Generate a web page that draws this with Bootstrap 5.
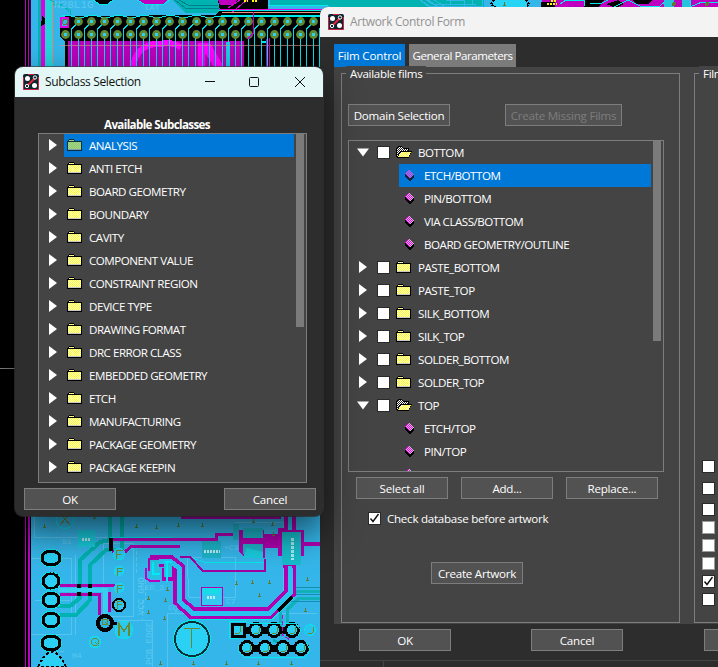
<!DOCTYPE html>
<html lang="en">
<head>
<meta charset="utf-8">
<title>Artwork Control Form</title>
<link href="https://cdn.jsdelivr.net/npm/bootstrap@5.3.0/dist/css/bootstrap.min.css" rel="stylesheet">
<style>
body{width:718px;height:667px;overflow:hidden;background:#000;font-family:"Open Sans","Noto Sans",sans-serif;font-size:11.6px;line-height:16px;color:#fff;letter-spacing:-.27px}
.desk{width:718px;height:667px;overflow:hidden}
.board{left:0;top:0;letter-spacing:0}
.win{background:#2d2d2d;border-radius:8px}
.win-art{left:320px;top:7px;width:500px;height:670px;border-radius:8px 0 0 0;overflow:hidden}
.win-sub{left:15px;top:67px;width:308px;height:449px;box-shadow:0 16px 36px rgba(0,0,0,.6),0 0 0 1px rgba(70,70,70,.7)}
.titlebar{height:30px;padding-left:8px;font-size:12px;letter-spacing:-.34px}
.titlebar span{margin-left:6px}
.win-art .titlebar{background:#f3f3f3;color:#929292}
.win-sub .titlebar{background:#e3f8f6;color:#111;border-radius:8px 8px 0 0}
.cap{width:46px}
.tabs{padding:7px 0 0 14px;gap:4px}
.tab-b{height:23px;line-height:24px;background:#7b7b7b;text-align:center;white-space:nowrap}
.tab-b.on{background:#0078d7;letter-spacing:-.17px}
.tab-b.wide{letter-spacing:-.46px}
.pane{margin-left:14px;height:557px;background:#444;padding:6px 0 0 7px;gap:14px}
.gbox{border:1px solid #7d7d7d;height:550px;width:339px}
.legend-t{height:14px;margin:-8px 0 0 4px;padding:0 4px;background:#444;width:max-content;line-height:16px;letter-spacing:-.33px}
.btn-x{background:#525252;border:1px solid #7d7d7d;color:#fff;border-radius:0;font-size:11.6px;line-height:20px;height:22px;width:92px;padding:1px 0 0;white-space:nowrap;letter-spacing:-.25px}
.btn-x.dim{color:#7d7d7d}
.tree{background:#444;border:1px solid #7d7d7d;overflow:hidden}
.tree .node{height:23px;letter-spacing:-.48px;line-height:23px;white-space:nowrap;padding-left:8px}
.tree .leaf{padding-left:56px}
.tree .leaf.sel{margin:0 2px 0 50px;padding-left:6px}
.node svg{flex:none;margin-bottom:1px}
.node .lbl{margin-left:7px}
.node .lbl.near{margin-left:6px}
.leaf .lbl{margin-left:9px}
.node .box{margin:0 6px 0 8px}
.sel{background:#0078d7}
.track{width:8px;background:#7b7b7b;flex:none}
.box{width:13px;height:13px;background:#fff;border:1px solid #2a2a2a;flex:none;line-height:0}
.box.soft{border-color:#9a9a9a}
</style>
<script src="https://cdn.jsdelivr.net/npm/bootstrap@5.3.0/dist/js/bootstrap.bundle.min.js"></script>
</head>
<body>
<svg width="0" height="0" class="position-absolute">
<defs>
<pattern id="yw" width="2" height="2" patternUnits="userSpaceOnUse"><path fill="#fff" d="M0 0h2v2H0z"/><path fill="#ff0" d="M0 0h1v1H0zM1 1h1v1H1z"/></pattern>
<pattern id="kw" width="2" height="2" patternUnits="userSpaceOnUse"><path fill="#222" d="M0 0h2v2H0z"/><path fill="#fff" d="M0 0h1v1H0zM1 1h1v1H1z"/></pattern>
<pattern id="sg" width="2" height="2" patternUnits="userSpaceOnUse"><path fill="#7fc4a8" d="M0 0h2v2H0z"/><path fill="#b4dc50" d="M0 0h1v1H0zM1 1h1v1H1z"/></pattern>
<pattern id="mg" width="2" height="2" patternUnits="userSpaceOnUse"><path fill="#c0c0c0" d="M0 0h2v2H0z"/><path fill="#f0f" d="M0 0h1v1H0zM1 1h1v1H1z"/></pattern>
<pattern id="mb" width="2" height="2" patternUnits="userSpaceOnUse"><path fill="#7c80d8" d="M0 0h2v2H0z"/><path fill="#b040f0" d="M0 0h1v1H0zM1 1h1v1H1z"/></pattern>
<symbol id="fold" viewBox="0 0 15 12"><g shape-rendering="crispEdges"><path fill="#000" d="M2 0h5v1h1v1h7v10H0V2h1V1h1z"/><path fill="url(#yw)" d="M2 1h5v1H2zM1 3h13v7H1z"/><path fill="#c8c8c8" d="M1 10h13v1H1z"/></g></symbol>
<symbol id="foldsel" viewBox="0 0 15 12"><g shape-rendering="crispEdges"><path fill="#103040" d="M2 0h5v1h1v1h7v10H0V2h1V1h1z"/><path fill="url(#sg)" d="M2 1h5v1H2zM1 3h13v7H1z"/><path fill="#7f9fb0" d="M1 10h13v1H1z"/></g></symbol>
<symbol id="open" viewBox="0 0 16 12"><g shape-rendering="crispEdges"><path fill="#000" d="M2 0h4v1h1v1h6v3h3v1h-1v2h-1v2h-1v2H1v-1H0V2h1V1h1z"/><path fill="url(#kw)" d="M2 1h4v1h1v1h5v2H4v1H3v2H2v2H1V2h1z"/><path fill="url(#yw)" d="M5 6h10v1h-1v2h-1v2H2V10h1V8h1V7h1z"/></g></symbol>
<symbol id="dia" viewBox="0 0 10 12"><g shape-rendering="crispEdges"><path fill="#000" d="M0 4l4-4 5 5.500v2.500l-4 4h-1L0 7z"/><path fill="url(#mg)" d="M0 4l4-4 5 5.500-4 4z"/></g></symbol>
<symbol id="diasel" viewBox="0 0 10 12"><g shape-rendering="crispEdges"><path fill="#182040" d="M0 4l4-4 5 5.500v2.500l-4 4h-1L0 7z"/><path fill="url(#mb)" d="M0 4l4-4 5 5.500-4 4z"/></g></symbol>
<symbol id="tr" viewBox="0 0 12 12"><path fill="#fff" d="M2 0l8 6-8 6z"/></symbol>
<symbol id="td" viewBox="0 0 12 12"><path fill="#fff" d="M0 2.500h12L6 10.500z"/></symbol>
<symbol id="chk" viewBox="0 0 11 11"><path d="M1.500 5.500l2.500 3 5.500-7.500" fill="none" stroke="#111" stroke-width="1.400"/></symbol>
<symbol id="app" viewBox="0 0 16 16"><rect width="16" height="16" rx="2" fill="#0e2532"/><path d="M.5 3v12.500h15V3M5 .5h6" fill="none" stroke="#d0203c" stroke-width="1"/><path d="M5 11l6.500-6.500" stroke="#ee2038" stroke-width="1.800"/><circle cx="4.500" cy="4.500" r="2.500" fill="#fff"/><circle cx="11.500" cy="11.500" r="2.500" fill="#fff"/><circle cx="12" cy="3.500" r="1.700" fill="none" stroke="#fff"/><circle cx="4" cy="12" r="1.700" fill="none" stroke="#fff"/></symbol>
<g id="pad"><circle r="4.400" fill="#5f8a35" shape-rendering="auto"/><path fill="#2bd0f5" d="M-1.500-1.500h3v3h-3z"/></g>
<g id="tick"><path d="M0-2v3M-1.500 1h3" stroke="#5f7a30" fill="none"/></g>
</defs>
</svg>
<div class="desk position-relative">
<svg class="board position-absolute" width="718" height="667" viewBox="0 0 718 667" shape-rendering="crispEdges">
<path fill="#000" d="M0 0h718v667H0z"/>
<path fill="#888" d="M0 368h16v1H0z"/>
<!-- upper part of the board -->
<path fill="#35b6ea" d="M31 0h300v67H31z"/>
<path fill="#00b2b0" d="M38 0h3v67h-3z"/>
<path fill="#e000e0" d="M41 0h4v67h-4z"/><path fill="#26d4dc" d="M45 0h8v67h-8z"/><path fill="#e08878" d="M52 0h1v63h-1z"/>
<path fill="#000" d="M42 16l3 2v6l-4 2z"/>
<path d="M25.500 0v67M28.500 0v67" stroke="#c000c0" fill="none"/><path d="M30.500 0v67" stroke="#404" fill="none"/>
<path d="M50 0l20 10v5M53 4h8l8 8" stroke="#00b2b0" fill="none"/>
<path fill="#00b2b0" d="M172 0h48v13h-35z"/>
<path d="M175 0l10 8h34M179 0l9 5h30" stroke="#007f90" fill="none"/>
<path fill="#000" d="M218 0h50v10h60v22H60V19l6-3 150-1 4-5z"/>
<path fill="#00b2b0" d="M270 0h68v6h-68z"/>
<path fill="#000" d="M93 0h19l-4 4h-9z"/>
<path fill="#c000c0" d="M138 0h30l-5 4h-20zM218 0h20l-6 5h-12z"/><path d="M93 0l6 4h9l5-4M137 0l7 4h20l6-4" stroke="#00eaea" fill="none"/>
<path d="M240 0l-12 8M247 0l-16 13" stroke="#e000e0" fill="none"/>
<path d="M244 1h4M252 1h5" stroke="#ff0" stroke-width="2" stroke-dasharray="2 1"/>
<path d="M219 9h109" stroke="#e000e0" fill="none"/><path d="M219 10.500h109M221 15.500h100" stroke="#00eaea" fill="none"/>
<path fill="#f09080" d="M222 12h98v1h-98z"/>
<path d="M268 5.500h60" stroke="#00eaea" fill="none"/>
<path fill="#000" d="M60 17h260v50H60z"/>
<path fill="#35b6ea" d="M54 17h8l-2 8v12l5 5v25H54z"/>
<path fill="#b800b8" d="M68 41h176v26H68z"/>
<path d="M133 67c2-16 13-24 28-23 7-2 12-1 20 3" stroke="#f0f" stroke-width="6" fill="none"/><path fill="#f0f" d="M198 43h12l14 24h-10l-9-14v14h-7z"/>
<path fill="#26c4dc" d="M226 42h4v25h-4z"/>
<path d="M60 45.500h260" stroke="#e09080" opacity=".65"/>
<path d="M60 16.500q7-2 13 0t13 0 13 0 13 0 13 0 13 0 13 0 13 0 13 0 13 0 13 0 13 0h104" stroke="#00eaea" fill="none"/>
<g id="pins"></g>
<path d="M253.500 12v21l-6 6M266 39v28M269.500 38v29" stroke="#c000c0" fill="none"/><path d="M261 42h5" stroke="#00eaea" stroke-width="2"/>
<path d="M61 18h7v9h-7z" stroke="#e000e0" stroke-width="2" fill="#35b6ea"/><circle cx="65" cy="22" r="2.500" fill="none" stroke="#5f7a30"/>
<!-- strip above the form -->
<path fill="#00b2b0" d="M330 0h156v8H330z"/><path d="M420 0l12 8M426 0l14 8M434 0l10 6h38v-6M450 0v4h26M420 0l8 6h30M428 0l6 4h38v-4M446 0h18v7" stroke="#35b6ea" fill="none"/>
<path fill="#35b6ea" d="M484 0h58v8h-58z"/><path fill="#26d4f5" d="M493 0h34v8h-34z"/><path d="M494 0l-3 4 5 4M526 0l3 4-3 4" stroke="#000" stroke-width="2" stroke-dasharray="2 1" fill="none"/><use href="#tick" x="504" y="4"/>
<path fill="#c000c0" d="M542 0h176v8H542z"/>
<path fill="#000" d="M541 2h14v6h-14zM584 0h20l-6 8h-14zM632 0h20l-4 4h-12zM606 4l12-4 6 4-8 4z"/><path d="M547 4h10M551 1h6" stroke="#ff0" stroke-width="2" stroke-dasharray="2 1"/>
<path d="M560 4l6-4h18v6M590 3h12l6-3M614 7l14-7 12 6h20l7-6M690 0v7l12-5h16" stroke="#00eaea" fill="none"/>
<path fill="#26c4dc" d="M664 0h10v8h-10zM682 0h8v8h-8z"/><circle cx="674" cy="4" r="2" fill="#5f7a30"/><circle cx="707" cy="4" r="2" fill="#5f7a30"/>
<!-- lower part of the board -->
<path fill="#35b6ea" d="M31 510h290v157H31z"/>
<path d="M25.500 510v157" stroke="#c000c0"/><path d="M29 510v157" stroke="#c000c0" stroke-width="2"/>
<g fill="none" stroke="#57c4ee"><path d="M34 515v22h75v-22M31 558h40v76H31M103 543h30v73h-30zM118 620h34v50M167 667v-54h150M187 557h48v40h-46zM235 522h48v80M75 555v80M35 600h35"/><path d="M44 667c2-12 12-16 20-16M136 545v30M142 600v20M145 580v20" stroke-dasharray="4 2"/></g>
<g fill="none" stroke="#00b2b0" stroke-width="4"><path d="M110 510v30l-10 2-20 18v38l-10 8H52M122 510v40h-16l-16 15v35l-14 15H60"/><path d="M273 640l20 10" stroke-width="3"/></g>
<path d="M321 591h-24l-17 17v28M321 598h-22l-12 12v28" stroke="#12b0b8" stroke-width="3" fill="none"/>
<path d="M321 587.500h-25M321 594.500h-28M321 601.500h-30" stroke="#158fae"/>
<g fill="none" stroke="#00eaea"><path d="M110 537h62M111 551h18l6-5h12M192 558l12 4h60"/></g>
<g fill="none" stroke="#b000b0" stroke-width="3"><path d="M181 517h100M111 551v-12h105v-5h24v15M112 551h14l6-5h48M60 585h60M60 594.500h39v20M109 592v20"/></g>
<path fill="#000" d="M77 584h4v12h-4zM88 584h4v12h-4zM109 538h4v13h-4z"/>
<path d="M58 590h48v24" stroke="#35d0f0" stroke-width="4" fill="none"/>
<path d="M150 561h20l9 7v33l13 12h78l20-20v-38" stroke="#b000b0" stroke-width="12" fill="none"/>
<path d="M150 561h20l9 7v33l13 12h78l20-20v-38" stroke="#26c4ef" stroke-width="5" fill="none"/>
<path d="M180 557h10l13 14h62v-12" stroke="#a000a0" stroke-width="2" fill="none"/>
<path d="M192 619.500h80l22-22" stroke="#00eaea" fill="none"/>
<path d="M278 611l14-14" stroke="#000" stroke-width="4" fill="none"/>
<path fill="#b000b0" d="M284 510h12v20h8v12h17v4h-17v10h-8v12h-13v-12h-5v-8h-38v-14h38v-6h6z"/>
<path fill="#18bccb" d="M282 532h19v33h-19z"/><path d="M292 538v22" stroke="#a8eaf0" stroke-width="3" stroke-dasharray="3 1"/><path d="M290 510v20M290 566v26" stroke="#26c4ef" stroke-width="4"/>
<path fill="#b000b0" d="M239 530h25v9h-25zM239 545h26v13h-20l-6-6z"/>
<path fill="#1db4c8" d="M243 528h20v10h-20zM243 544h20v10h-20zM233 524h6v16h-6zM202 541h19v17h-19z"/><path fill="#18ccdd" d="M243 558l4-10 16 4v6zM78 530h17v17H78z"/>
<path d="M201 587h21v18h-21z" fill="#35c8f0" stroke="#b000b0"/><path fill="#18dbe8" d="M203 588h17v6h-17z"/><path d="M204 551h16M207 597h9M82 539h9" stroke="#b8ecf4" stroke-width="3" stroke-dasharray="2 1"/>
<path fill="#b000b0" d="M148 558h11v13h-11zM162 568h12v13h-12z"/><path fill="#26c4dc" d="M150 560h9v19h-9zM164 561h8v16h-8z"/><path d="M153 562v12h7M167 562v20M164 562h8" stroke="#00eaff" stroke-width="2" fill="none"/>
<path d="M146 568v10l4 3h10" stroke="#c000c0" stroke-width="2" fill="none"/>
<g stroke="#000" stroke-width="3" fill="#2bd0f5"><ellipse cx="51" cy="558" rx="9" ry="7"/><ellipse cx="51" cy="581" rx="8" ry="7.500"/><ellipse cx="51" cy="600" rx="8" ry="7"/><ellipse cx="51" cy="620" rx="8" ry="7"/><ellipse cx="51" cy="643" rx="9" ry="7"/></g>
<g stroke="#00eaea" stroke-dasharray="3 1" fill="none"><ellipse cx="51" cy="558" rx="11" ry="9"/><ellipse cx="51" cy="581" rx="10" ry="9"/><ellipse cx="51" cy="600" rx="10" ry="9"/><ellipse cx="51" cy="620" rx="10" ry="9"/><ellipse cx="51" cy="643" rx="11" ry="9"/><circle cx="65" cy="520" r="8.500"/></g>
<path d="M60 525l10-12M60 513l10 12" stroke="#6a8a30"/>
<g stroke="#00eaea" stroke-dasharray="2 1" fill="#2bc8ef"><circle cx="119" cy="554" r="6"/><circle cx="119" cy="571" r="5"/><circle cx="119" cy="588" r="5"/><circle cx="124" cy="630" r="9"/><circle cx="95" cy="642" r="6"/></g>
<path d="M38 667q14-30 28 0z" fill="#2bd0f5" stroke="#000" stroke-width="2" stroke-dasharray="3 2"/>
<circle cx="119" cy="605" r="6" fill="#2bc8ef" stroke="#000" stroke-width="2"/><circle cx="105" cy="623" r="7" fill="#26b8e8" stroke="#000" stroke-width="4"/><path d="M111 622l6 2" stroke="#000" stroke-width="3"/>
<g fill="none" stroke="#6a8a30" stroke-width="1"><path d="M116.500 559v-9h6M116.500 554.500h4M117.500 576v-8h5M117.500 571.500h4M117.500 593v-8h5M117.500 588.500h4M117.500 609v-8h5M117.500 604.500h4"/><circle cx="105" cy="622" r="3"/><circle cx="95" cy="642" r="3.500"/></g>
<path d="M119 636v-12l5 7 5-7v12" stroke="#6a8a30" stroke-width="1.500" fill="none"/>
<path d="M105 622l4 4M95 642l4 4" stroke="#6a8a30"/>
<circle cx="192" cy="639" r="17" fill="#2bd0f5" stroke="#04303a" stroke-width="2"/><circle cx="192" cy="639" r="18.500" fill="none" stroke="#00eaea"/><path d="M184 628.500h16M191.500 628v20" stroke="#6a8a30" fill="none"/>
<path d="M238 630h54M247 648h54" stroke="#000" stroke-width="7"/>
<g stroke="#000" stroke-width="3" fill="#2bd0f5"><path d="M232 624h12v12h-12z"/><circle cx="256" cy="630" r="6.500"/><circle cx="274" cy="630" r="6.500"/><circle cx="292" cy="630" r="6.500"/><circle cx="247" cy="648" r="6.500"/><circle cx="265" cy="648" r="6.500"/><circle cx="283" cy="648" r="6.500"/><circle cx="301" cy="648" r="6.500"/></g>
<path d="M229 621h16l4 2h46l6 7-3 6M229 621v17h10M239 645l-1 6 6 6h62l4-7-4-8" stroke="#00eaea" fill="none"/>
<circle cx="310" cy="630" r="5.500" fill="#26c4ef" stroke="#00eaea" stroke-dasharray="3 1"/>
<path d="M240 626v6q-2 3-5 1M259 627v5q-2 3-5 1M277 627v5q-2 3-5 1M295 627v5q-2 3-5 1M313 627v5q-2 3-5 1M250 645v5q-2 3-5 1M268 645v5q-2 3-5 1M286 645v5q-2 3-5 1M304 645v5q-2 3-5 1" stroke="#6a8a30" fill="none"/>
<path d="M282 615v20l8 5" stroke="#d000d0" fill="none" stroke-dasharray="4 2"/>
<g id="ticks"></g>
<g fill="#5cc8ee" font-family="Liberation Mono, monospace" font-size="8"><text x="62" y="544">S1</text><text x="72" y="658">H4</text><text x="140" y="590">LED_3</text><text x="168" y="610">CQ</text><text x="226" y="604">C7</text><text x="224" y="550">+C3</text><text x="54" y="8" font-size="11">N28L1G</text><text x="145" y="10">LAT</text><text transform="translate(152 665) rotate(-90)" font-size="9">PCB EDGE</text><text transform="translate(144 615) rotate(-90)" font-size="9">VCC GND</text></g>
</svg>

<section class="win win-art position-absolute">
  <div class="titlebar d-flex align-items-center"><svg width="16" height="16"><use href="#app"/></svg><span>Artwork Control Form</span></div>
  <div class="tabs d-flex"><div class="tab-b on" style="width:71px">Film Control</div><div class="tab-b wide" style="width:107px">General Parameters</div></div>
  <div class="pane d-flex">
    <div class="gbox flex-shrink-0">
      <div class="legend-t">Available films</div>
      <div class="d-flex" style="padding:24px 0 0 6px;gap:55px"><button class="btn btn-x" style="width:102px">Domain Selection</button><button class="btn btn-x dim" style="width:117px">Create Missing Films</button></div>
      <div class="tree d-flex" style="width:316px;height:332px;margin:14px 0 0 6px">
        <div style="width:304px" id="films"></div>
        <div class="track" style="height:200px"></div>
      </div>
      <div class="d-flex" style="padding:5px 0 0 14px;gap:13px"><button class="btn btn-x">Select all</button><button class="btn btn-x">Add...</button><button class="btn btn-x">Replace...</button></div>
      <div class="d-flex align-items-center" style="padding:11px 0 0 26px"><span class="box"><svg width="11" height="11"><use href="#chk"/></svg></span><span style="margin-left:6px;padding-top:1px">Check database before artwork</span></div>
      <div style="padding:35px 0 0 89px"><button class="btn btn-x">Create Artwork</button></div>
    </div>
    <div class="gbox flex-shrink-0">
      <div class="legend-t">Film options</div>
      <div class="d-flex flex-column" style="padding:380px 0 0 7px;gap:5px"><span class="box"></span><span class="box" style="margin-top:4px"></span><span class="box" style="margin-top:3px"></span><span class="box soft"></span><span class="box soft"></span><span class="box soft"></span><span class="box"><svg width="11" height="11"><use href="#chk"/></svg></span><span class="box"></span></div>
    </div>
  </div>
  <div class="d-flex" style="padding:5px 0 9px 39px;gap:80px;border-bottom:1px solid #444"><button class="btn btn-x flex-shrink-0">OK</button><button class="btn btn-x flex-shrink-0">Cancel</button><button class="btn btn-x flex-shrink-0" style="margin-left:1px" aria-label="Apply"></button></div>
  <div style="width:64px;height:10px;border-right:1px solid #444"></div>
</section>

<section class="win win-sub position-absolute">
  <div class="titlebar d-flex align-items-center"><svg width="16" height="16"><use href="#app"/></svg><span class="me-auto">Subclass Selection</span>
    <svg class="cap" style="margin-right:-1px" height="12" viewBox="0 0 46 12" fill="none" stroke="#111"><path d="M19 5.500h10"/></svg><svg class="cap" height="12" viewBox="0 0 46 12" fill="none" stroke="#111"><rect x="18.500" y="1.500" width="9" height="9" rx="1"/></svg><svg class="cap" height="12" viewBox="0 0 46 12" fill="none" stroke="#111"><path d="M18 1l10 10M28 1l-10 10"/></svg></div>
  <div class="fw-bold" style="padding:20px 0 0 89px;height:36px;letter-spacing:-.62px">Available Subclasses</div>
  <div class="tree d-flex" style="width:269px;height:350px;margin-left:23px">
    <div style="width:257px" id="sub"></div>
    <div class="track" style="height:193px"></div>
  </div>
  <div class="d-flex justify-content-between" style="padding:5px 7px 0 9px"><button class="btn btn-x">OK</button><button class="btn btn-x">Cancel</button></div>
</section>
</div>
<script>
const icon=(id,w)=>`<svg width="${w}" height="12"><use href="#${id}"/></svg>`;
const names=['ANALYSIS','ANTI ETCH','BOARD GEOMETRY','BOUNDARY','CAVITY','COMPONENT VALUE','CONSTRAINT REGION','DEVICE TYPE','DRAWING FORMAT','DRC ERROR CLASS','EMBEDDED GEOMETRY','ETCH','MANUFACTURING','PACKAGE GEOMETRY','PACKAGE KEEPIN'];
document.getElementById('sub').innerHTML=names.map((n,i)=>`<div class="node d-flex align-items-center">${icon('tr',12)}<div class="d-flex align-items-center ${i?'':'sel'}" style="margin-left:5px;padding-left:3px;width:230px">${icon(i?'fold':'foldsel',15)}<span class="lbl">${n}</span></div></div>`).join('');
// [kind, label]: o = expanded film, c = collapsed film, l = layer, s = selected layer
const films=[['o','BOTTOM'],['s','ETCH/BOTTOM'],['l','PIN/BOTTOM'],['l','VIA CLASS/BOTTOM'],['l','BOARD GEOMETRY/OUTLINE'],['c','PASTE_BOTTOM'],['c','PASTE_TOP'],['c','SILK_BOTTOM'],['c','SILK_TOP'],['c','SOLDER_BOTTOM'],['c','SOLDER_TOP'],['o','TOP'],['l','ETCH/TOP'],['l','PIN/TOP'],['l','']];
document.getElementById('films').innerHTML=films.map(([k,n])=>{
  if(k==='l'||k==='s')return `<div class="node leaf d-flex align-items-center ${k==='s'?'sel':''}">${icon(k==='s'?'diasel':'dia',10)}<span class="lbl">${n}</span></div>`;
  const o=k==='o';
  return `<div class="node d-flex align-items-center">${icon(o?'td':'tr',12)}<span class="box"></span>${icon(o?'open':'fold',o?16:15)}<span class="lbl ${o?'near':''}">${n}</span></div>`;
}).join('');
// header pins with their traces
let s='';
for(let i=0;i<20;i++){const x=Math.round(65+i*13.05)+.5;
s+=`<path d="M${x+13} 22l-7 7V67M${x+13} 35V67" stroke="#00dcea" fill="none"/>`;}
for(let i=0;i<20;i++){const x=Math.round(65+i*13.05)+.5;if(i)s+=`<use href="#pad" x="${x}" y="21.500"/>`;s+=`<use href="#pad" x="${x}" y="34.500"/>`;}
document.getElementById('pins').innerHTML=s;
document.getElementById('ticks').innerHTML=[[44,526],[94,517],[136,526],[156,527],[178,525],[202,525],[148,598],[165,600],[148,612],[164,618],[272,524],[273,534],[307,579],[236,583],[252,582],[269,582],[259,595],[305,610],[160,663],[193,663],[226,663],[258,663],[291,663],[167,589],[253,521]].map(p=>`<use href="#tick" x="${p[0]+.5}" y="${p[1]}"/>`).join('');
</script>
</body>
</html>
